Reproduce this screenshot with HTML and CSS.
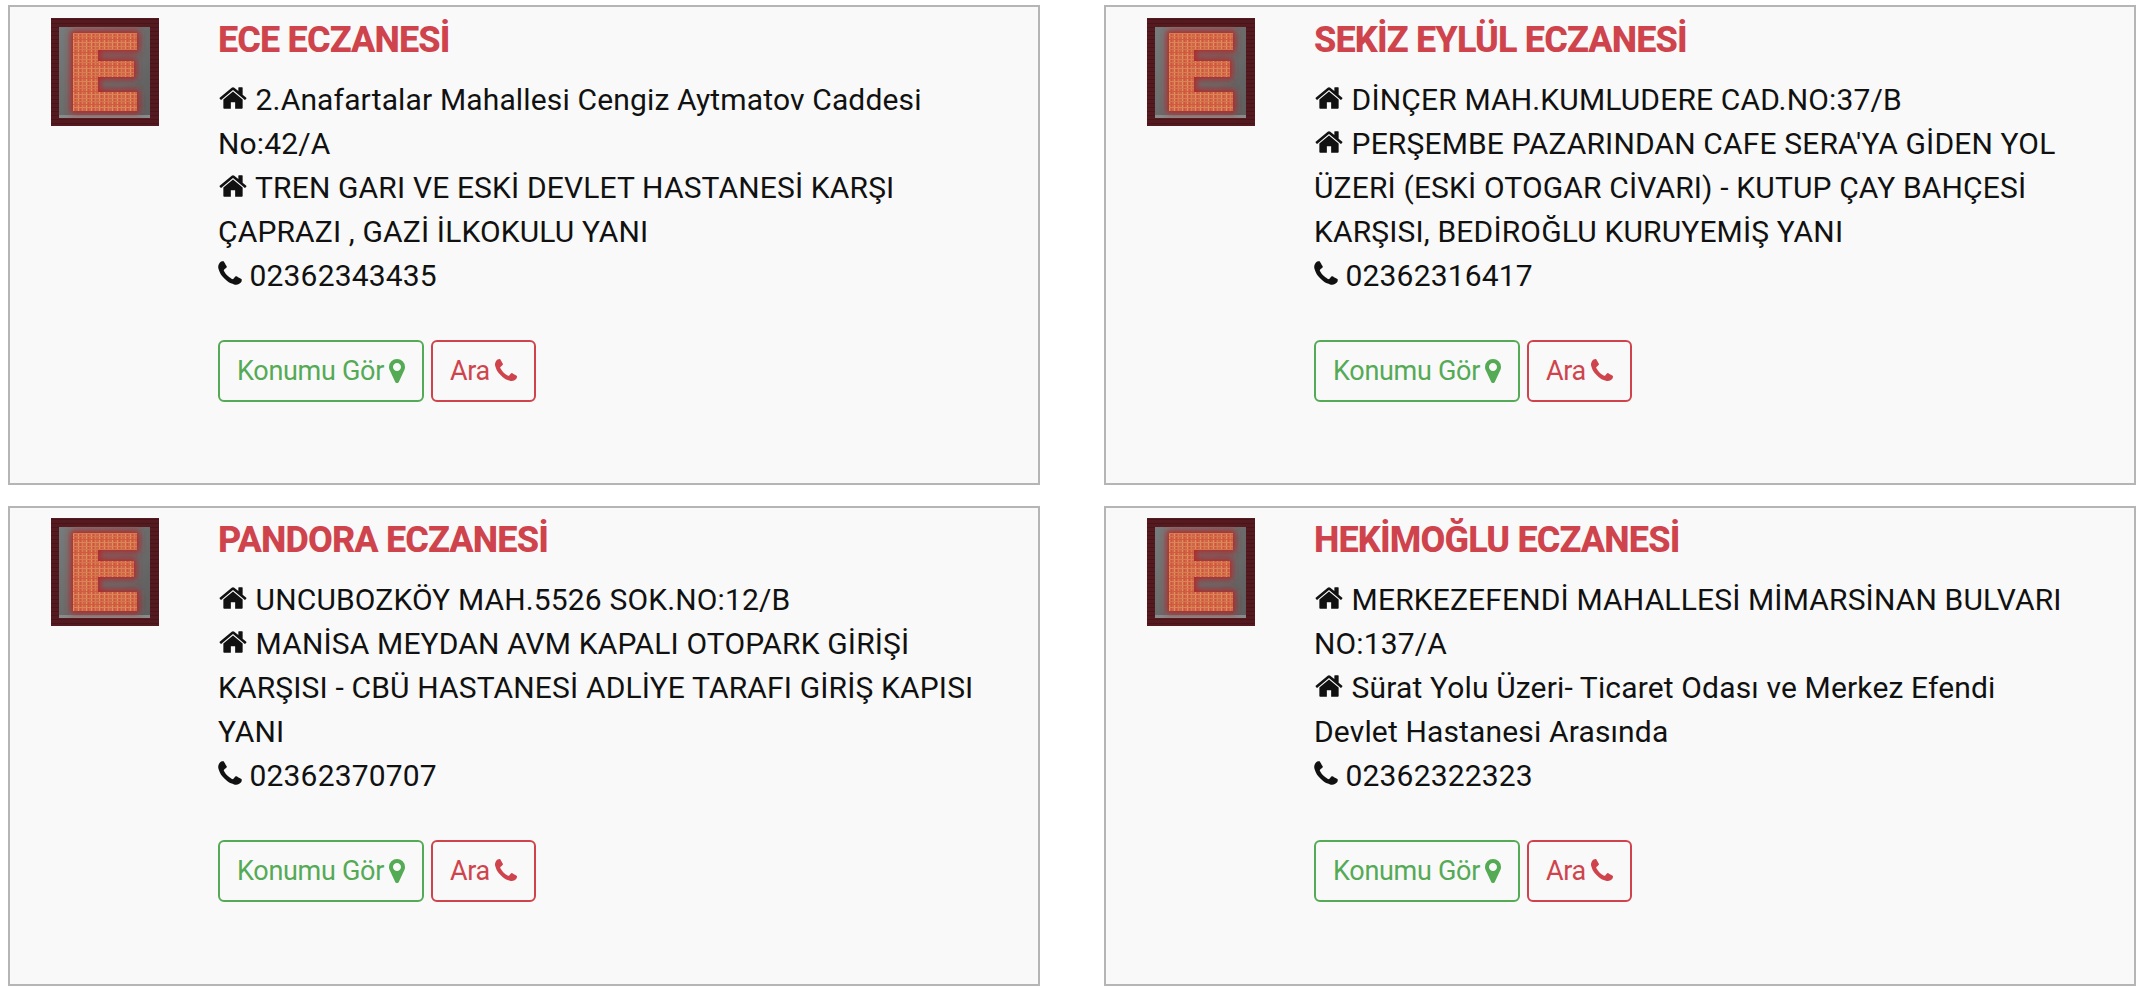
FILE: index.html
```html
<!DOCTYPE html>
<html lang="tr">
<head>
<meta charset="utf-8">
<title>Nöbetçi Eczaneler</title>
<link rel="stylesheet" href="styles.css">
</head>
<body>
<svg class="defs" width="0" height="0" aria-hidden="true">
  <defs>
    <symbol id="i-home" viewBox="0 0 1792 1792"><path d="M1472 992v480q0 26-19 45t-45 19h-384v-384h-256v384h-384q-26 0-45-19t-19-45v-480q0-1 .5-3t.5-3l575-474 575 474q1 2 1 6zm223-69l-62 74q-8 9-21 11h-3q-13 0-21-7l-692-577-692 577q-12 8-24 7-13-2-21-11l-62-74q-8-10-7-23.500t11-21.500l719-599q32-26 76-26t76 26l244 204v-195q0-14 9-23t23-9h192q14 0 23 9t9 23v408l219 182q10 8 11 21.500t-7 23.500z"/></symbol>
    <symbol id="i-phone" viewBox="0 0 1792 1792"><path d="M1600 1240q0 27-10 70.500t-21 68.500q-21 50-122 106-94 51-186 51-27 0-53-3.500t-57.500-12.500-47-14.500-55.500-20.500-49-18q-98-35-175-83-127-79-264-216t-216-264q-48-77-83-175-3-9-18-49t-20.500-55.500-14.500-47-12.500-57.500-3.500-53q0-92 51-186 56-101 106-122 25-11 68.500-21t70.500-10q14 0 21 3 18 6 53 76 11 19 30 54t35 63.500 31 53.500q3 4 17.500 25t21.500 35.500 7 28.500q0 20-28.500 50t-62 55-62 53-28.500 46q0 9 5 22.500t8.500 20.500 14 24 11.500 19q76 137 174 235t235 174q2 1 19 11.500t24 14 20.500 8.500 22.500 5q18 0 46-28.500t53-62 55-62 50-28.500q14 0 28.500 7t35.500 21.500 25 17.500q25 15 53.500 31t63.500 35 54 30q70 35 76 53 3 7 3 21z"/></symbol>
    <symbol id="i-marker" viewBox="0 0 1792 1792"><path d="M1152 640q0-106-75-181t-181-75-181 75-75 181 75 181 181 75 181-75 75-181zm256 0q0 109-33 179l-364 774q-16 33-47.500 52t-67.500 19-67.500-19-46.500-52l-365-774q-33-70-33-179 0-212 150-362t362-150 362 150 150 362z"/></symbol>
    <pattern id="p-frame" width="4" height="4" patternUnits="userSpaceOnUse">
      <rect width="4" height="4" fill="#551a1f"/>
      <rect y="1" width="4" height="1" fill="#471519"/>
    </pattern>
    <pattern id="p-led" width="13" height="13" patternUnits="userSpaceOnUse">
      <rect width="13" height="13" fill="#cf664a"/>
      <rect x="1" width="1" height="13" fill="#df8f58"/>
      <rect x="3" width="1" height="13" fill="#d6523a"/>
      <rect x="5" width="1" height="13" fill="#d97c50"/>
      <rect x="9" width="1" height="13" fill="#df8f58"/>
      <rect x="11" width="1" height="13" fill="#d6523a"/>
      <rect y="2" width="13" height="1" fill="#d97c50"/>
      <rect y="5" width="13" height="1" fill="#d6744c"/>
      <rect y="8" width="13" height="1" fill="#d25a40"/>
      <rect y="11" width="13" height="1" fill="#db8454"/>
    </pattern>
    <linearGradient id="g-panel" x1="0" y1="0" x2="1" y2="1">
      <stop offset="0" stop-color="#767b7b"/>
      <stop offset=".55" stop-color="#6a6a6a"/>
      <stop offset="1" stop-color="#5e5e5e"/>
    </linearGradient>
    <filter id="f-glow" x="-30%" y="-30%" width="160%" height="160%"><feGaussianBlur stdDeviation="3.2"/></filter>
    <filter id="f-soft" x="-10%" y="-10%" width="120%" height="120%"><feGaussianBlur stdDeviation=".6"/></filter>
    <symbol id="logo" viewBox="0 0 108 108">
      <rect width="108" height="108" fill="url(#p-frame)"/>
      <rect x="8" y="9" width="91" height="91" fill="url(#g-panel)" filter="url(#f-soft)"/>
      <rect x="8" y="97" width="91" height="3" fill="#8a8a8a" filter="url(#f-soft)"/>
      <path d="M22 15H86V32H47V43H83V59H47V74H86V93H22Z" fill="#b4282c" stroke="#b4282c" stroke-width="5" filter="url(#f-glow)"/>
      <path d="M22 15H86V32H47V43H83V59H47V74H86V93H22Z" fill="url(#p-led)" filter="url(#f-soft)"/>
    </symbol>
  </defs>
</svg>

<main class="grid">
  <article class="card">
    <svg class="logo"><use href="#logo"/></svg>
    <div class="info">
      <h3 class="name">ECE ECZANESİ</h3>
      <p class="details">
        <svg class="ic"><use href="#i-home"/></svg> 2.Anafartalar Mahallesi Cengiz Aytmatov Caddesi<br>No:42/A<br>
        <svg class="ic"><use href="#i-home"/></svg> TREN GARI VE ESKİ DEVLET HASTANESİ KARŞI<br>ÇAPRAZI , GAZİ İLKOKULU YANI<br>
        <svg class="ic ic-phone"><use href="#i-phone"/></svg> 02362343435
      </p>
      <div class="actions">
        <a class="btn btn-green">Konumu Gör <svg class="ic-btn ic-marker"><use href="#i-marker"/></svg></a>
        <a class="btn btn-red">Ara <svg class="ic-btn ic-call"><use href="#i-phone"/></svg></a>
      </div>
    </div>
  </article>
  <article class="card">
    <svg class="logo"><use href="#logo"/></svg>
    <div class="info">
      <h3 class="name">SEKİZ EYLÜL ECZANESİ</h3>
      <p class="details">
        <svg class="ic"><use href="#i-home"/></svg> DİNÇER MAH.KUMLUDERE CAD.NO:37/B<br>
        <svg class="ic"><use href="#i-home"/></svg> PERŞEMBE PAZARINDAN CAFE SERA'YA GİDEN YOL<br>ÜZERİ (ESKİ OTOGAR CİVARI) - KUTUP ÇAY BAHÇESİ<br>KARŞISI, BEDİROĞLU KURUYEMİŞ YANI<br>
        <svg class="ic ic-phone"><use href="#i-phone"/></svg> 02362316417
      </p>
      <div class="actions">
        <a class="btn btn-green">Konumu Gör <svg class="ic-btn ic-marker"><use href="#i-marker"/></svg></a>
        <a class="btn btn-red">Ara <svg class="ic-btn ic-call"><use href="#i-phone"/></svg></a>
      </div>
    </div>
  </article>
  <article class="card">
    <svg class="logo"><use href="#logo"/></svg>
    <div class="info">
      <h3 class="name">PANDORA ECZANESİ</h3>
      <p class="details">
        <svg class="ic"><use href="#i-home"/></svg> UNCUBOZKÖY MAH.5526 SOK.NO:12/B<br>
        <svg class="ic"><use href="#i-home"/></svg> MANİSA MEYDAN AVM KAPALI OTOPARK GİRİŞİ<br>KARŞISI - CBÜ HASTANESİ ADLİYE TARAFI GİRİŞ KAPISI<br>YANI<br>
        <svg class="ic ic-phone"><use href="#i-phone"/></svg> 02362370707
      </p>
      <div class="actions">
        <a class="btn btn-green">Konumu Gör <svg class="ic-btn ic-marker"><use href="#i-marker"/></svg></a>
        <a class="btn btn-red">Ara <svg class="ic-btn ic-call"><use href="#i-phone"/></svg></a>
      </div>
    </div>
  </article>
  <article class="card">
    <svg class="logo"><use href="#logo"/></svg>
    <div class="info">
      <h3 class="name">HEKİMOĞLU ECZANESİ</h3>
      <p class="details">
        <svg class="ic"><use href="#i-home"/></svg> MERKEZEFENDİ MAHALLESİ MİMARSİNAN BULVARI<br>NO:137/A<br>
        <svg class="ic"><use href="#i-home"/></svg> Sürat Yolu Üzeri- Ticaret Odası ve Merkez Efendi<br>Devlet Hastanesi Arasında<br>
        <svg class="ic ic-phone"><use href="#i-phone"/></svg> 02362322323
      </p>
      <div class="actions">
        <a class="btn btn-green">Konumu Gör <svg class="ic-btn ic-marker"><use href="#i-marker"/></svg></a>
        <a class="btn btn-red">Ara <svg class="ic-btn ic-call"><use href="#i-phone"/></svg></a>
      </div>
    </div>
  </article>
</main>
</body>
</html>
```
FILE: styles.css
```css
* { box-sizing: border-box; }
html, body { margin: 0; background: #fff; }
body {
  font-family: Roboto, "Liberation Sans", sans-serif;
  color: #111;
}
.defs { position: absolute; }
.grid {
  display: grid;
  grid-template-columns: 1032px 1032px;
  column-gap: 64px;
  row-gap: 20.1px;
  padding: 5.45px 16px 0 8px;
}
.card {
  display: flex;
  height: 480px;
  padding: 10.8px 41px 0 41px;
  gap: 59px;
  background: #f9f9f9;
  border: 2px solid #b5b5b5;
}
.logo { width: 108px; height: 108px; flex: none; }
.info { flex: 1; min-width: 0; }
.name {
  margin: 0;
  font-size: 36px;
  line-height: 44px;
  font-weight: 800;
  letter-spacing: -0.85px;
  color: #cf444c;
}
.details {
  margin: 16px 0 0;
  font-size: 30px;
  line-height: 44px;
  letter-spacing: 0.15px;
  white-space: nowrap;
}
.ic {
  width: 30px;
  height: 30px;
  fill: #111;
  vertical-align: -3px;
}
.ic-phone { margin-left: -3px; margin-right: -3px; }
.actions {
  display: flex;
  gap: 7px;
  margin-top: 42px;
}
.btn {
  display: flex;
  align-items: center;
  height: 62px;
  padding: 0 17px;
  gap: 5px;
  font-size: 27px;
  letter-spacing: -0.3px;
  border: 2px solid currentColor;
  border-radius: 6px;
  background: transparent;
}
.btn-green { color: #55aa55; }
.btn-red { color: #cf444c; }
.ic-btn { width: 28px; height: 28px; fill: currentColor; }
.ic-marker { margin: 0 -6px; }
.ic-call { margin: 0 -3px; }
```
